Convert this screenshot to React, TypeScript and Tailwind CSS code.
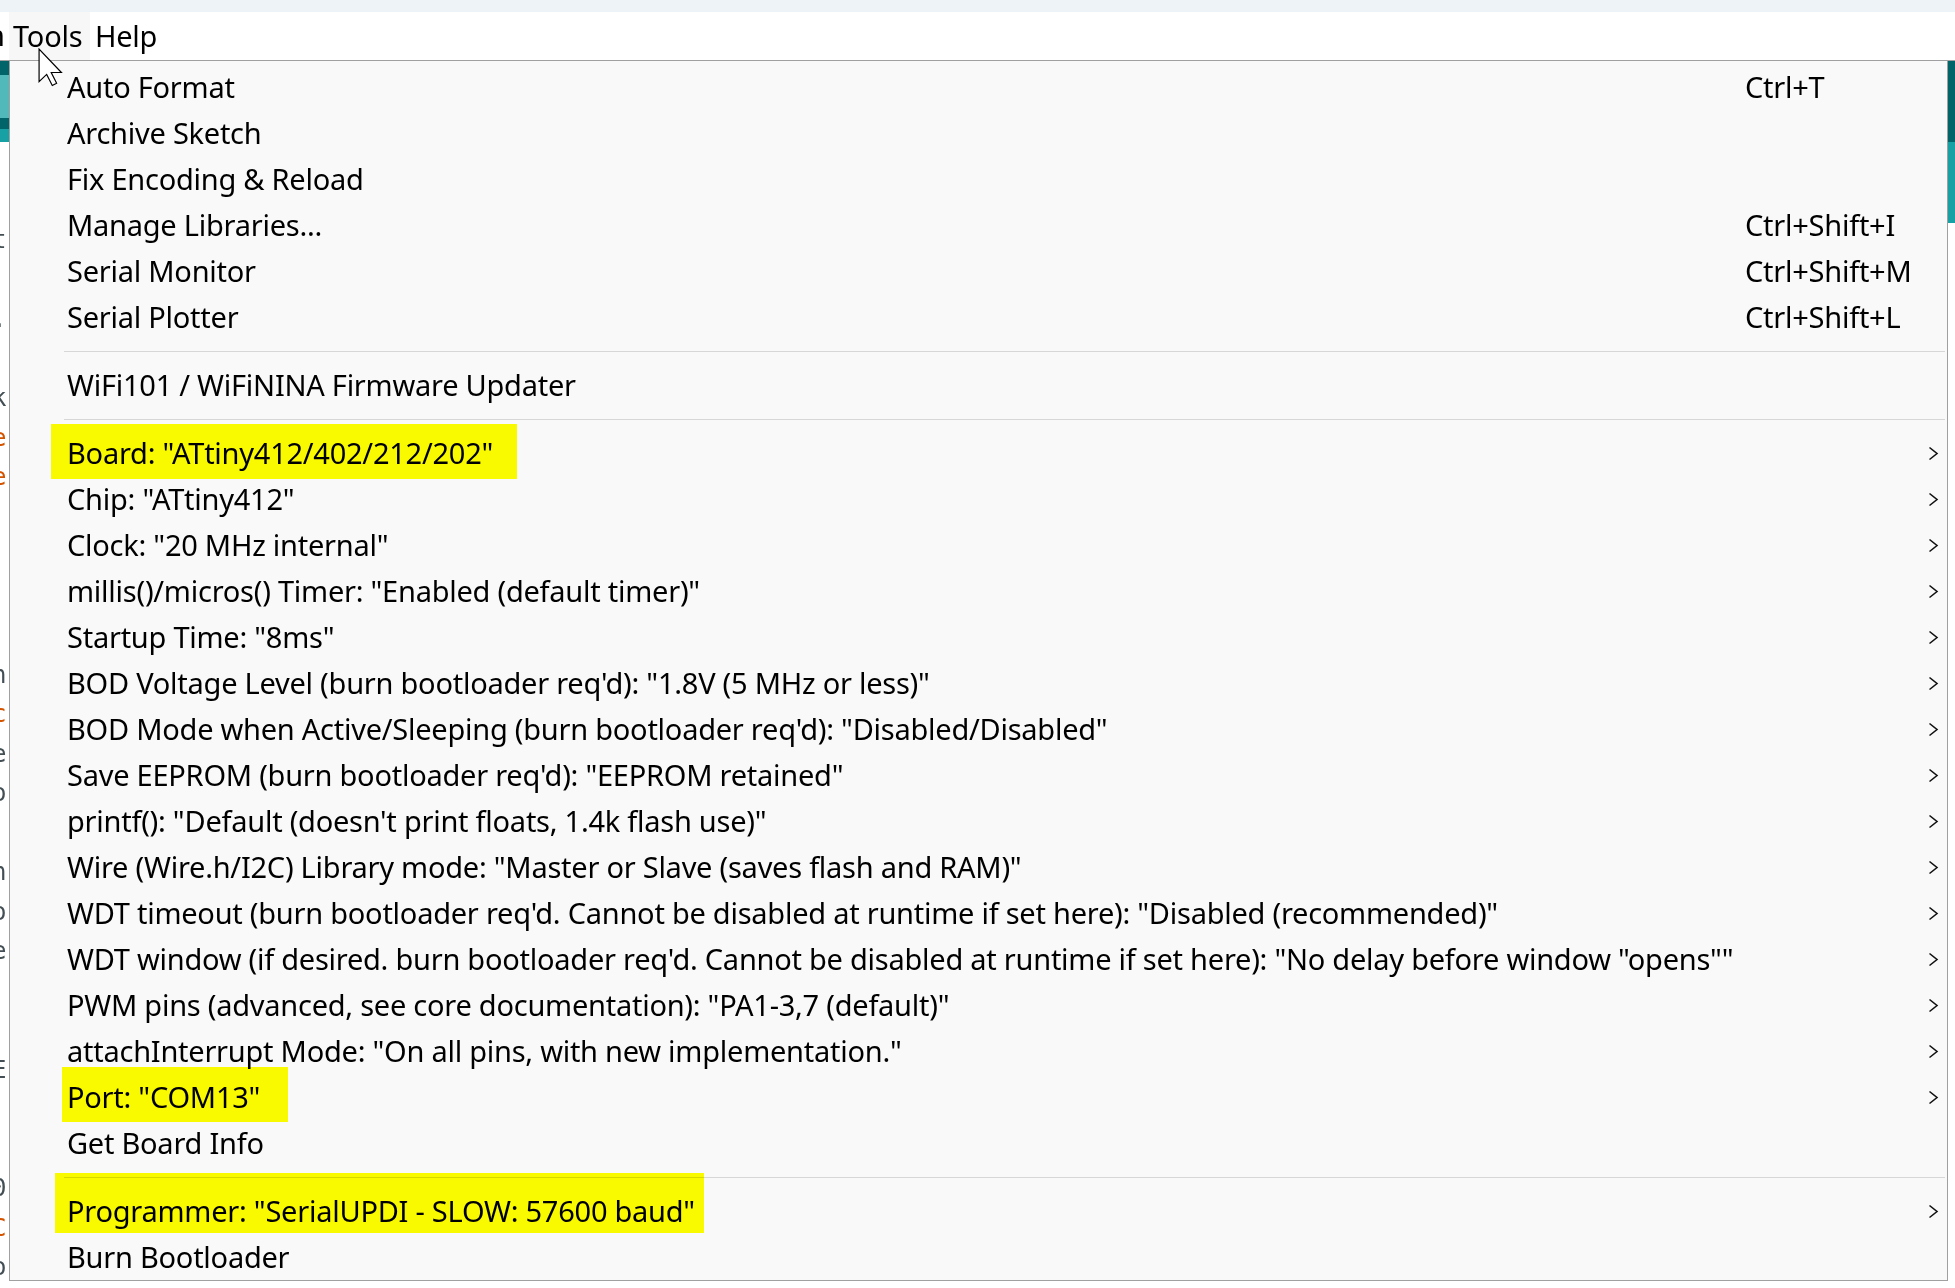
import React from "react";

type Item = {
  label: string;
  keys?: string;
  sub?: boolean;
  mark?: "board" | "port" | "prog";
};

const groups: Item[][] = [
  [
    { label: "Auto Format", keys: "Ctrl+T" },
    { label: "Archive Sketch" },
    { label: "Fix Encoding & Reload" },
    { label: "Manage Libraries...", keys: "Ctrl+Shift+I" },
    { label: "Serial Monitor", keys: "Ctrl+Shift+M" },
    { label: "Serial Plotter", keys: "Ctrl+Shift+L" },
  ],
  [{ label: "WiFi101 / WiFiNINA Firmware Updater" }],
  [
    { label: 'Board: "ATtiny412/402/212/202"', sub: true, mark: "board" },
    { label: 'Chip: "ATtiny412"', sub: true },
    { label: 'Clock: "20 MHz internal"', sub: true },
    { label: 'millis()/micros() Timer: "Enabled (default timer)"', sub: true },
    { label: 'Startup Time: "8ms"', sub: true },
    { label: 'BOD Voltage Level (burn bootloader req\'d): "1.8V (5 MHz or less)"', sub: true },
    { label: 'BOD Mode when Active/Sleeping (burn bootloader req\'d): "Disabled/Disabled"', sub: true },
    { label: 'Save EEPROM (burn bootloader req\'d): "EEPROM retained"', sub: true },
    { label: 'printf(): "Default (doesn\'t print floats, 1.4k flash use)"', sub: true },
    { label: 'Wire (Wire.h/I2C) Library mode: "Master or Slave (saves flash and RAM)"', sub: true },
    {
      label:
        'WDT timeout (burn bootloader req\'d. Cannot be disabled at runtime if set here): "Disabled (recommended)"',
      sub: true,
    },
    {
      label:
        'WDT window (if desired. burn bootloader req\'d. Cannot be disabled at runtime if set here): "No delay before window "opens""',
      sub: true,
    },
    { label: 'PWM pins (advanced, see core documentation): "PA1-3,7 (default)"', sub: true },
    { label: 'attachInterrupt Mode: "On all pins, with new implementation."', sub: true },
    { label: 'Port: "COM13"', sub: true, mark: "port" },
    { label: "Get Board Info" },
  ],
  [
    { label: 'Programmer: "SerialUPDI - SLOW: 57600 baud"', sub: true, mark: "prog" },
    { label: "Burn Bootloader" },
  ],
];

// slivers of the sketch that peek out left of the menu
const codeBits: { at: number; ch: string; color: string }[] = [
  { at: 2, ch: "t", color: "text-[#434f54]" },
  { at: 4, ch: ".", color: "text-[#434f54]" },
  { at: 6, ch: "k", color: "text-[#434f54]" },
  { at: 7, ch: "e", color: "text-[#d35400]" },
  { at: 8, ch: "e", color: "text-[#d35400]" },
  { at: 13, ch: "n", color: "text-[#434f54]" },
  { at: 14, ch: "c", color: "text-[#d35400]" },
  { at: 15, ch: "e]", color: "text-[#434f54]" },
  { at: 16, ch: "o", color: "text-[#434f54]" },
  { at: 18, ch: "n", color: "text-[#434f54]" },
  { at: 19, ch: "o", color: "text-[#434f54]" },
  { at: 20, ch: "e", color: "text-[#434f54]" },
  { at: 23, ch: "E", color: "text-[#434f54]" },
  { at: 26, ch: "0", color: "text-[#434f54]" },
  { at: 27, ch: "C", color: "text-[#d35400]" },
  { at: 28, ch: "o", color: "text-[#434f54]" },
];

function Chevron() {
  return (
    <svg width="11" height="15" viewBox="0 0 11 15" className="shrink-0">
      <polyline points="1.5,1.5 9,7.5 1.5,13.5" fill="none" stroke="#111111" strokeWidth="1.6" />
    </svg>
  );
}

function Mark({ kind }: { kind: Item["mark"] }) {
  if (kind === "board")
    return <span className="absolute left-[41px] top-[-6px] w-[466px] h-[55px] bg-[#ffff00] mix-blend-multiply" />;
  if (kind === "port")
    return <span className="absolute left-[52px] top-[-7px] w-[226px] h-[55px] bg-[#ffff00] mix-blend-multiply" />;
  if (kind === "prog")
    return <span className="absolute left-[45px] top-[-15px] w-[649px] h-[60px] bg-[#ffff00] mix-blend-multiply" />;
  return null;
}

function Row({ item }: { item: Item }) {
  return (
    <div className="relative flex items-center h-[46px] pl-[57px]">
      {item.mark && <Mark kind={item.mark} />}
      <span className="relative w-[1678px] shrink-0 whitespace-nowrap">{item.label}</span>
      <span className="relative w-[183px] shrink-0 whitespace-nowrap">{item.keys}</span>
      {item.sub && <Chevron />}
    </div>
  );
}

function Cursor() {
  return (
    <svg
      className="absolute left-[38px] top-[48px]"
      width="26"
      height="39"
      viewBox="0 0 12 18"
    >
      <path
        d="M0.5 0.5 L0.5 15.5 L4 12.2 L6.6 17.3 L8.6 16.3 L6.1 11.3 L10.8 11.3 Z"
        fill="#ffffff"
        stroke="#000000"
        strokeWidth="0.55"
        strokeLinejoin="miter"
      />
    </svg>
  );
}

export default function App() {
  return (
    <div className="relative w-[1955px] h-[1288px] overflow-hidden bg-white text-black font-['Noto_Sans',sans-serif] text-[29px] tracking-[-0.25px] leading-[46px]">
      {/* title bar sliver */}
      <div className="h-[12px] bg-[#eef3f8]" />

      {/* menu bar */}
      <div className="flex h-[48px] items-center bg-white">
        <div className="w-[9px] h-full overflow-hidden">
          <span className="ml-[-13px]">n</span>
        </div>
        <div className="h-full w-[81px] bg-[#f7f7f7] flex items-center pl-[4px]">Tools</div>
        <div className="pl-[5px]">Help</div>
      </div>

      <div className="flex h-[1228px]">
        {/* editor peeking on the left */}
        <div className="w-[9px] shrink-0 flex flex-col overflow-hidden border-t border-[#a0a0a0]">
          <div className="h-[16px] bg-[#006468]" />
          <div className="h-[51px] bg-[#52b9bb]" />
          <div className="h-[12px] bg-[#006468]" />
          <div className="h-[16px] bg-[#17a1a5]" />
          <div className="flex flex-col font-['DejaVu_Sans_Mono',monospace] text-[24px] leading-[39.5px] tracking-normal">
            {Array.from({ length: 29 }, (_, i) => {
              const bit = codeBits.find((b) => b.at === i);
              return (
                <div key={i} className="h-[39.5px] whitespace-nowrap">
                  {bit && <span className={`ml-[-8px] ${bit.color}`}>{bit.ch}</span>}
                </div>
              );
            })}
          </div>
        </div>

        {/* the Tools menu */}
        <div className="flex flex-col w-[1939px] shrink-0">
          <div className="border border-[#a0a0a0] bg-[#f9f9f9] pt-[3px]">
            {groups.map((g, gi) => (
              <div key={gi}>
                {gi > 0 && (
                  <div className="h-[22px] flex items-center ml-[54px] mr-[2px]">
                    <div className="h-px w-full bg-[#d7d7d7]" />
                  </div>
                )}
                {g.map((item, ii) => (
                  <Row key={ii} item={item} />
                ))}
              </div>
            ))}
          </div>
          <div className="flex-1 bg-white" />
        </div>

        {/* editor edge on the right */}
        <div className="flex-1 flex flex-col border-t border-[#a0a0a0]">
          <div className="h-[81px] bg-[#006468]" />
          <div className="h-[81px] bg-[#17a1a5]" />
          <div className="flex-1 bg-white" />
        </div>
      </div>

      <Cursor />
    </div>
  );
}
